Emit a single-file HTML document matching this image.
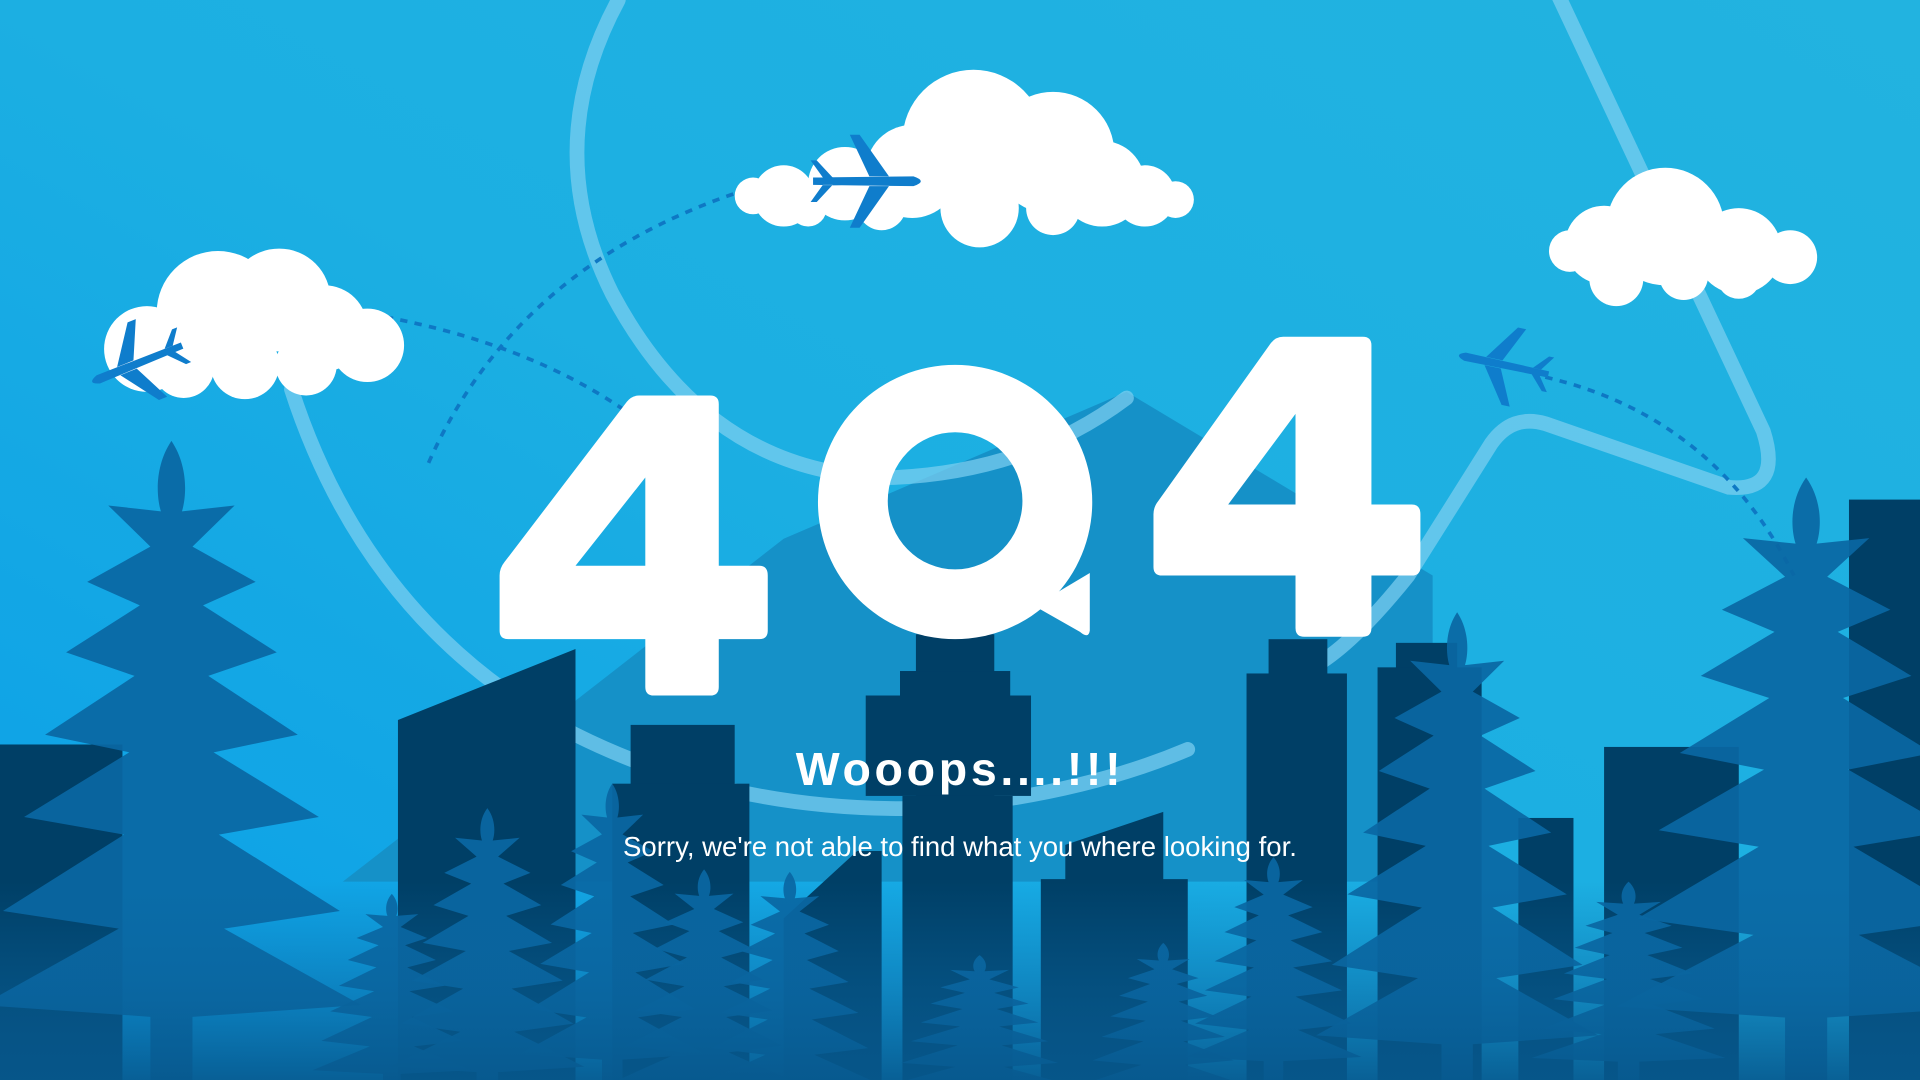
<!DOCTYPE html>
<html><head><meta charset="utf-8"><style>
html,body{margin:0;padding:0;width:1920px;height:1080px;overflow:hidden;background:#1aa8e0}
svg{display:block}
</style></head><body>
<svg width="1920" height="1080" viewBox="0 0 1568 882" preserveAspectRatio="none" xmlns="http://www.w3.org/2000/svg">
<defs>
<linearGradient id="sky" x1="0" y1="1" x2="1" y2="0">
<stop offset="0" stop-color="#0a9fe8"/><stop offset="0.5" stop-color="#1cafe2"/><stop offset="1" stop-color="#22b3e0"/>
</linearGradient>
<linearGradient id="ground" x1="0" y1="0" x2="0" y2="1">
<stop offset="0" stop-color="#0b66a0" stop-opacity="0"/><stop offset="0.5" stop-color="#0a629b" stop-opacity="0.45"/><stop offset="1" stop-color="#07588d" stop-opacity="0.9"/>
</linearGradient>
<path id="pine" d="M0,0 C3,4 3,9 2,12 L12,11 L4,18 L16,24 L6,28 L20,36 L7,40 L24,50 L8,53 L28,64 L9,67 L32,80 L10,83 L36,96 L4,98 L4,110 L-4,110 L-4,98 L-36,96 L-10,83 L-32,80 L-9,67 L-28,64 L-8,53 L-24,50 L-7,40 L-20,36 L-6,28 L-16,24 L-4,18 L-12,11 L-2,12 C-3,9 -3,4 0,0Z"/>
<path id="plane" d="M-44,-3 L38,-4 Q50,0 38,4 L-44,3 Z M2,-4 L-14,-38 L-6,-38 L18,-4 Z M2,4 L-14,38 L-6,38 L18,4 Z M-36,-3 L-46,-17 L-41,-17 L-28,-3 Z M-36,3 L-46,17 L-41,17 L-28,3 Z"/>
</defs>
<rect width="1568" height="882" fill="url(#sky)"/>
<polygon points="280,720 640,440 920,320 1170,470 1170,720" fill="#1591c8"/>
<g fill="none" stroke="#7fd0f1" stroke-opacity="0.7" stroke-width="12" stroke-linecap="round">
<path d="M505,0 Q440,120 500,240 Q580,390 730,390 Q840,385 920,325"/>
<path d="M238,318 Q300,510 470,600 Q600,665 760,660 Q880,650 970,612"/>
<path d="M1272,-5 L1440,352 Q1456,402 1412,398 L1262,346 Q1235,338 1218,362 L1150,470 Q1110,520 1080,540"/>
</g>
<g fill="none" stroke="#0e78c4" stroke-width="3" stroke-dasharray="6 6">
<path d="M350,378 Q420,220 600,158 L660,148"/>
<path d="M150,280 Q230,250 310,258 Q430,280 510,335"/>
<path d="M1262,308 Q1400,340 1465,470"/>
</g>
<g fill="#fff">
<circle cx="178" cy="255" r="50"/><circle cx="228" cy="245" r="42"/><circle cx="265" cy="268" r="35"/><circle cx="300" cy="282" r="30"/><circle cx="120" cy="285" r="35"/><circle cx="150" cy="300" r="25"/><circle cx="200" cy="298" r="28"/><circle cx="250" cy="298" r="25"/>
<circle cx="795" cy="115" r="58"/><circle cx="860" cy="125" r="50"/><circle cx="745" cy="140" r="38"/><circle cx="900" cy="150" r="35"/><circle cx="935" cy="160" r="25"/><circle cx="960" cy="163" r="15"/><circle cx="690" cy="150" r="30"/><circle cx="640" cy="160" r="25"/><circle cx="615" cy="160" r="15"/><circle cx="800" cy="170" r="32"/><circle cx="720" cy="168" r="20"/><circle cx="860" cy="170" r="22"/><circle cx="660" cy="170" r="15"/>
<circle cx="1360" cy="185" r="48"/><circle cx="1310" cy="200" r="32"/><circle cx="1420" cy="205" r="35"/><circle cx="1462" cy="210" r="22"/><circle cx="1282" cy="205" r="17"/><circle cx="1320" cy="228" r="22"/><circle cx="1375" cy="225" r="20"/><circle cx="1420" cy="226" r="18"/>
</g>
<g fill="#0f7dcc">
<use href="#plane" transform="translate(708,148) scale(1)"/>
<use href="#plane" transform="translate(112,297) rotate(158) scale(0.9)"/>
<use href="#plane" transform="translate(1228,298) rotate(192) scale(0.85)"/>
</g>
<g fill="#003f66">
<rect x="0" y="608" width="100" height="274"/>
<polygon points="325,588 470,530 470,882 325,882"/>
<rect x="515" y="592" width="85" height="290"/><rect x="500" y="640" width="112" height="242"/>
<rect x="748" y="518" width="64" height="364"/><rect x="735" y="548" width="90" height="30"/><rect x="707" y="568" width="135" height="82"/><rect x="737" y="650" width="90" height="232"/>
<polygon points="850,718 870,718 870,690 950,663 950,718 970,718 970,882 850,882"/>
<rect x="1036" y="522" width="48" height="360"/><rect x="1018" y="550" width="82" height="332"/>
<rect x="1140" y="525" width="50" height="357"/><rect x="1125" y="545" width="85" height="337"/>
<rect x="1240" y="668" width="45" height="214"/><rect x="1310" y="610" width="110" height="272"/>
<rect x="1510" y="408" width="58" height="474"/>
<polygon points="640,750 700,695 720,695 720,882 640,882"/>
</g>
<g fill="#0a67a3" fill-opacity="0.92">
<use href="#pine" transform="translate(140,360) scale(4.3,4.8)"/>
<use href="#pine" transform="translate(1475,390) scale(4.3,4.5)"/>
<use href="#pine" transform="translate(1190,500) scale(3.2,3.6)"/>
<use href="#pine" transform="translate(398,660) scale(2.2,2.2)"/>
<use href="#pine" transform="translate(500,640) scale(2.1,2.3)"/>
<use href="#pine" transform="translate(575,710) scale(2,1.8)"/>
<use href="#pine" transform="translate(645,712) scale(2,1.8)"/>
<use href="#pine" transform="translate(320,730) scale(1.8,1.5)"/>
<use href="#pine" transform="translate(950,770) scale(1.8,1.2)"/>
<use href="#pine" transform="translate(1040,700) scale(2,1.7)"/>
<use href="#pine" transform="translate(1330,720) scale(2.2,1.5)"/>
<use href="#pine" transform="translate(800,780) scale(2,1.1)"/>
</g>
<rect x="0" y="720" width="1568" height="162" fill="url(#ground)"/>
<g fill="#fff" fill-rule="evenodd">
<path d="M522,323 L580,323 Q587,323 587,330 L587,462 L620,462 Q627,462 627,470 L627,515 Q627,522 620,522 L587,522 L587,561 Q587,568 580,568 L534,568 Q527,568 527,561 L527,522 L415,522 Q408,522 408,515 L408,470 Q408,464 412,459 L512,328 Q516,323 522,323 Z M527,390 L470,462 L527,462 Z"/>
<path d="M780,298 A112,112 0 1 1 780,522 A112,112 0 1 1 780,298 Z M780,353 A55,56 0 1 0 780,465 A55,56 0 1 0 780,353 Z"/>
<path d="M845,495 L853,490 L890,468 L890,515 Q889,522 882,516 Z"/>
<path d="M1048,275 L1113,275 Q1120,275 1120,282 L1120,412 L1153,412 Q1160,412 1160,420 L1160,463 Q1160,470 1153,470 L1120,470 L1120,513 Q1120,520 1113,520 L1065,520 Q1058,520 1058,513 L1058,470 L949,470 Q942,470 942,463 L942,420 Q942,414 946,409 L1038,280 Q1042,275 1048,275 Z M1058,338 L1003,412 L1058,412 Z"/>
</g>
<text x="784" y="641" text-anchor="middle" fill="#fff" font-family="Liberation Sans, sans-serif" font-weight="bold" font-size="38" letter-spacing="3">Wooops....!!!</text>
<text x="784" y="699" text-anchor="middle" fill="#fff" font-family="Liberation Sans, sans-serif" font-size="22.5">Sorry, we're not able to find what you where looking for.</text>
</svg>
</body></html>
